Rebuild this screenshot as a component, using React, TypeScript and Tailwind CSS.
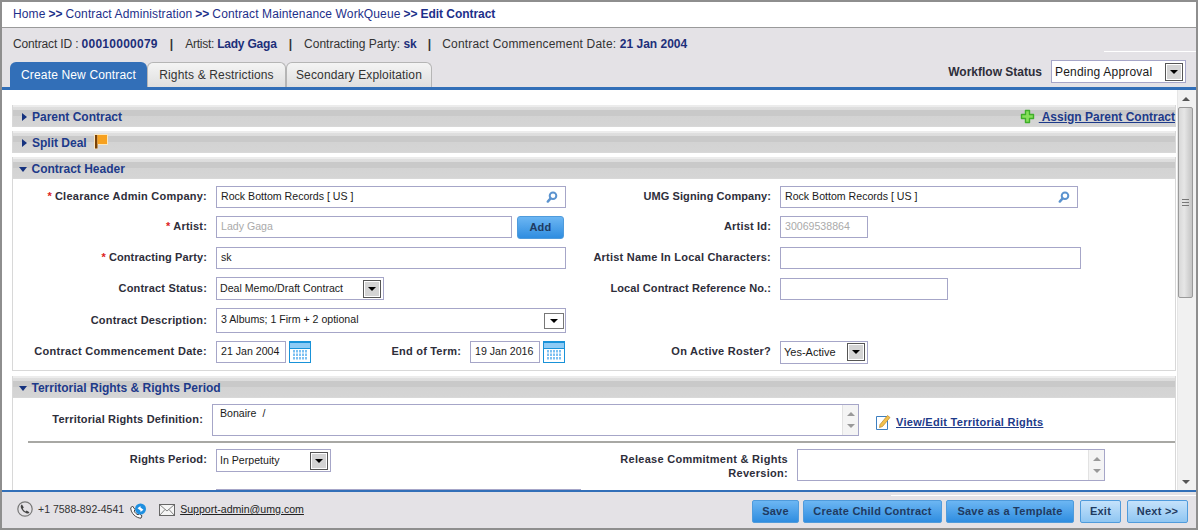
import { ReactNode } from "react";

const inputCls = "h-[22px] border border-[#a6a6c8] bg-white px-[4px] flex items-center text-[10.6px] text-[#1a1a1a] shrink-0";

function Label({ children, req, w, t = "tracking-[0.18px]" }: { children: ReactNode; req?: boolean; w: string; t?: string }) {
  return (
    <div className={`${w} ${t} shrink-0 -mt-[2px] text-right text-[11px] font-bold text-[#2e2e3a] pr-[9px] leading-[14px]`}>
      {req && <span className="text-[#d22] mr-[3px]">*</span>}
      {children}
    </div>
  );
}

function SelectBtn() {
  return (
    <span className="w-[18px] h-[18px] border border-[#555] bg-[#d4d4d4] flex items-center justify-center shrink-0 shadow-[inset_0_0_0_1px_#fff]">
      <span className="w-0 h-0 border-x-[4px] border-x-transparent border-t-[4px] border-t-black" />
    </span>
  );
}

function Select({ text, w, big }: { text: string; w: string; big?: boolean }) {
  return (
    <div className={`${w} h-[23px] border border-[#a6a6c8] bg-white flex items-center justify-between pl-[3px] pr-[2px] ${big ? "text-[11px]" : "text-[10.6px]"} text-[#1a1a1a] shrink-0`}>
      <span className="mt-[1px]">{text}</span>
      <SelectBtn />
    </div>
  );
}

function Lookup({ w }: { w: string }) {
  return (
    <div className={`${inputCls} ${w} justify-between pr-[7px]`}>
      <span>Rock Bottom Records [ US ]</span>
      <svg width="12" height="12" viewBox="0 0 12 12">
        <circle cx="7" cy="4.8" r="3.3" fill="none" stroke="#5b93cf" strokeWidth="2" />
        <path d="M4.6 7.4 1.8 10.6" stroke="#5b93cf" strokeWidth="2.4" strokeLinecap="round" />
      </svg>
    </div>
  );
}

function Calendar() {
  const cols = [4, 7, 10, 13, 16];
  const rows = [9, 12.5, 16];
  return (
    <svg width="22" height="22" viewBox="0 0 22 22" className="shrink-0 ml-[3px]">
      <rect x="0.5" y="0.5" width="21" height="21" fill="#fff" stroke="#1992d8" />
      <rect x="1" y="1" width="20" height="6" fill="#8ecbf5" />
      <rect x="1" y="0" width="20" height="2" fill="#1992d8" />
      <rect x="1" y="7" width="20" height="1" fill="#1992d8" />
      {rows.map((y) => cols.map((x) => <rect key={`${x}-${y}`} x={x} y={y} width="2" height="2.5" fill="#7cc0f2" />))}
    </svg>
  );
}

function Section({ title, open, children, right }: { title: string; open?: boolean; children?: ReactNode; right?: ReactNode }) {
  return (
    <div className="h-[22px] shrink-0 border-x border-b border-[#d8d8d8] bg-[linear-gradient(#ececec_0,#ececec_2px,#dfdfdf_2px,#dcdcdc_5px,#c9c9c9_5px,#c9c9c9_11px,#d3d3d3_11px,#d5d5d5_100%)] flex items-center pt-[2px] pl-[5px] text-[12px] font-bold text-[#1d3a8a]">
      {open ? (
        <span className="w-0 h-0 border-x-[4.5px] border-x-transparent border-t-[5px] border-t-[#16337f] mr-[5px] ml-[0.5px] mt-[1px]" />
      ) : (
        <span className="w-0 h-0 border-y-[4.5px] border-y-transparent border-l-[5px] border-l-[#16337f] ml-[4px] mr-[5px]" />
      )}
      <span>{title}</span>
      {children}
      {right}
    </div>
  );
}

function ScrollArrow({ up }: { up?: boolean }) {
  return up ? (
    <span className="w-0 h-0 border-x-[4px] border-x-transparent border-b-[4px] border-b-[#555]" />
  ) : (
    <span className="w-0 h-0 border-x-[4px] border-x-transparent border-t-[4px] border-t-[#555]" />
  );
}

function MiniScroll() {
  return (
    <div className="w-[16px] h-full border-l border-[#e2e2e2] bg-[#f4f4f4] flex flex-col items-center justify-between py-[7px]">
      <span className="w-0 h-0 border-x-[4px] border-x-transparent border-b-[4px] border-b-[#999]" />
      <span className="w-0 h-0 border-x-[4px] border-x-transparent border-t-[4px] border-t-[#999]" />
    </div>
  );
}

function BlueBtn({ children, w, light }: { children: ReactNode; w: string; light?: boolean }) {
  return (
    <div className={`${w} h-[23px] rounded-[2px] border border-[#4f9bdc] flex items-center justify-center text-[11px] font-bold tracking-[0.25px] text-[#1f3a60] ${light ? "bg-[linear-gradient(#c5e2fb,#8fc6f2)]" : "bg-[linear-gradient(#6cb6f3,#2f8de0)]"}`}>
      {children}
    </div>
  );
}

const crumb = "text-[#1d2f8a]";
const sep = "mx-[3px] text-[#1d2f8a]";
const tabOff = "h-[25px] rounded-t-[6px] border border-b-0 border-[#b5b5b5] bg-[linear-gradient(#f4f4f4,#dfdfdf)] text-[#333] text-[12px] tracking-[0.15px] flex items-center justify-center";

export default function App() {
  return (
    <div className="w-[1198px] h-[530px] border-2 border-[#8e8e8e] bg-white font-['Liberation_Sans',Arial,sans-serif] flex flex-col overflow-hidden">
      <div className="h-[26px] shrink-0 border-b border-[#9a9a9a] flex items-center pl-[11px] pb-[2px] text-[12px] bg-white">
        <span className={`${crumb} tracking-[0.12px]`}>Home</span>
        <b className={sep}>&gt;&gt;</b>
        <span className={`${crumb} tracking-[0.12px]`}>Contract Administration</span>
        <b className={sep}>&gt;&gt;</b>
        <span className={`${crumb} tracking-[0.12px]`}>Contract Maintenance WorkQueue</span>
        <b className={sep}>&gt;&gt;</b>
        <b className={`${crumb} -tracking-[0.05px]`}>Edit Contract</b>
      </div>

      <div className="h-[62px] shrink-0 bg-[#e4e2e6] border-b-[3px] border-[#326fb8] flex flex-col relative">
        <div className="absolute right-0 top-[23px] w-[92px] h-[1px] bg-white" />
        <div className="h-[32px] flex items-center pl-[11px] text-[12px] text-[#333] whitespace-pre">
          <span className="-tracking-[0.15px]">Contract ID : </span><b className="text-[#1d2f7a] tracking-[0.25px]">00010000079</b>
          <b className="mx-[12px]">|</b>
          <span className="-tracking-[0.25px]">Artist: </span><b className="text-[#1d2f7a] -tracking-[0.2px]">Lady Gaga</b>
          <b className="mx-[12px]">|</b>
          <span>Contracting Party: </span><b className="text-[#1d2f7a]">sk</b>
          <b className="mx-[11px]">|</b>
          <span className="tracking-[0.2px]">Contract Commencement Date: </span><b className="text-[#1d2f7a]">21 Jan 2004</b>
        </div>
        <div className="flex-1 flex items-end pl-[8px] pr-[10px]">
          <div className="w-[137px] h-[25px] rounded-t-[6px] bg-[#326fb8] text-white text-[12px] tracking-[0.15px] flex items-center justify-center">Create New Contract</div>
          <div className={`w-[139px] ${tabOff}`}>Rights &amp; Restrictions</div>
          <div className={`w-[146px] ${tabOff}`}>Secondary Exploitation</div>
          <div className="ml-auto flex items-center mb-[4px]">
            <b className="text-[12px] text-[#2e2e3a] mr-[9px] mt-[1px]">Workflow Status</b>
            <div className="w-[135px] h-[23px] border border-[#a6a6c8] bg-white flex items-center justify-between pl-[3px] pr-[2px] text-[12px] tracking-[0.2px] text-[#1a1a1a]">
              <span className="mt-[1px]">Pending Approval</span>
              <SelectBtn />
            </div>
          </div>
        </div>
      </div>

      <div className="h-[400px] shrink-0 flex overflow-hidden">
        <div className="flex-1 min-w-0 pl-[10px] pr-[1px] pt-[15px] flex flex-col">
          <Section
            title="Parent Contract"
            right={
              <div className="ml-auto flex items-center text-[12px] text-[#1d3a8a]">
                <svg width="15" height="15" viewBox="0 0 15 15" className="mr-[4px]">
                  <path d="M5.5 1.5h4v4h4v4h-4v4h-4v-4h-4v-4h4z" fill="#86e05a" stroke="#3fae2a" strokeWidth="1.4" strokeLinejoin="round" />
                </svg>
                <span className="underline whitespace-pre"> Assign Parent Contract</span>
              </div>
            }
          />
          <div className="h-[4px] shrink-0" />
          <Section title="Split Deal">
            <svg width="14" height="15" viewBox="0 0 14 15" className="ml-[7px] -mt-[2px]">
              <rect x="0" y="0" width="14" height="11" fill="#fbe7c0" />
              <rect x="0" y="0" width="4" height="15" fill="#fbe7c0" />
              <rect x="1" y="1" width="2.5" height="13.5" fill="#7a4208" />
              <rect x="3.5" y="1" width="9.5" height="9" fill="#f7a11f" />
            </svg>
          </Section>
          <div className="h-[4px] shrink-0" />
          <Section title="Contract Header" open />

          <div className="border-x border-b border-[#d8d8d8] h-[192px] shrink-0 pt-[7px] flex flex-col gap-[8px]">
            <div className="flex items-center h-[22px]">
              <Label w="w-[203px]" t="tracking-[0.24px]" req>Clearance Admin Company:</Label>
              <Lookup w="w-[350px]" />
              <Label w="w-[214px]" t="tracking-[0.08px]">UMG Signing Company:</Label>
              <Lookup w="w-[298px]" />
            </div>
            <div className="flex items-center h-[22px]">
              <Label w="w-[203px]" req>Artist:</Label>
              <div className={`${inputCls} w-[296px] text-[#aaa]`}>Lady Gaga</div>
              <div className="w-[47px] h-[23px] ml-[5px] mr-[2px] rounded-[3px] border border-[#4f9bdc] bg-[linear-gradient(#6cb6f3,#2f8de0)] flex items-center justify-center text-[11px] font-bold tracking-[0.25px] text-[#1f3a60]">Add</div>
              <Label w="w-[214px]">Artist Id:</Label>
              <div className={`${inputCls} w-[88px] text-[#aaa]`}>30069538864</div>
            </div>
            <div className="flex items-center h-[22px] mt-[1px]">
              <Label w="w-[203px]" t="tracking-[0.12px]" req>Contracting Party:</Label>
              <div className={`${inputCls} w-[350px]`}>sk</div>
              <Label w="w-[214px]" t="tracking-[0.22px]">Artist Name In Local Characters:</Label>
              <div className={`${inputCls} w-[301px]`} />
            </div>
            <div className="flex items-center h-[23px]">
              <Label w="w-[203px]">Contract Status:</Label>
              <Select text="Deal Memo/Draft Contract" w="w-[168px]" />
              <Label w="w-[396px]" t="tracking-[0.1px]">Local Contract Reference No.:</Label>
              <div className={`${inputCls} w-[168px]`} />
            </div>
            <div className="flex items-center h-[25px]">
              <Label w="w-[203px]">Contract Description:</Label>
              <div className="w-[350px] h-[25px] border border-[#a6a6c8] bg-white flex items-center justify-between pl-[4px] pr-[1px] text-[10.6px] text-[#1a1a1a]">
                <span className="-mt-[1px]">3 Albums; 1 Firm + 2 optional</span>
                <span className="w-[20px] h-[16px] border border-[#777] bg-white flex items-center justify-center">
                  <span className="w-0 h-0 border-x-[4px] border-x-transparent border-t-[4px] border-t-black" />
                </span>
              </div>
            </div>
            <div className="flex items-center h-[22px]">
              <Label w="w-[203px]" t="tracking-[0.31px]">Contract Commencement Date:</Label>
              <div className={`${inputCls} w-[70px]`}>21 Jan 2004</div>
              <Calendar />
              <Label w="w-[159px]" t="tracking-[0.2px]">End of Term:</Label>
              <div className={`${inputCls} w-[70px]`}>19 Jan 2016</div>
              <Calendar />
              <Label w="w-[215px]" t="tracking-[0.24px]">On Active Roster?</Label>
              <Select text="Yes-Active" w="w-[88px]" big />
            </div>
          </div>

          <div className="h-[5px] shrink-0" />
          <Section title="Territorial Rights & Rights Period" open />
          <div className="border-x border-[#d8d8d8] flex-1 min-h-0 overflow-hidden">
            <div className="flex items-start h-[43px] pt-[6px]">
              <Label w="w-[199px]"><span className="block pt-[10px]">Territorial Rights Definition:</span></Label>
              <div className="w-[647px] h-[32px] border border-[#a6a6c8] bg-white flex justify-between text-[10.6px] text-[#1a1a1a] shrink-0">
                <span className="pl-[7px] pt-[1px] whitespace-pre">Bonaire  /</span>
                <MiniScroll />
              </div>
              <div className="flex items-center ml-[17px] mt-[10px] text-[11px] font-bold tracking-[0.28px] text-[#1d3a8a]">
                <svg width="15" height="16" viewBox="0 0 15 16" className="mr-[5px]">
                  <path d="M.5 2.5h11v13H.5z" fill="#fff" stroke="#3d7fc0" />
                  <path d="M4 10.5 11.5 1.5l2.5 2-7.5 9-3 1z" fill="#f2c14e" stroke="#b9862a" strokeWidth="0.7" />
                </svg>
                <span className="underline">View/Edit Territorial Rights</span>
              </div>
            </div>
            <div className="h-[2px] bg-[#a8a8a4] ml-[15px]" />
            <div className="flex items-start pt-[6px]">
              <Label w="w-[203px]" t="tracking-[0.14px]"><span className="block pt-[5px]">Rights Period:</span></Label>
              <Select text="In Perpetuity" w="w-[115px]" />
              <Label w="w-[466px]" t="tracking-[0.28px]"><span className="block pt-[5px]">Release Commitment &amp; Rights<br />Reversion:</span></Label>
              <div className="w-[308px] h-[32px] border border-[#a6a6c8] bg-white flex justify-end shrink-0">
                <MiniScroll />
              </div>
            </div>
            <div className="h-[1px] bg-[#a6a6c8] ml-[203px] w-[365px] mt-[8px]" />
          </div>
        </div>

        <div className="w-[19px] shrink-0 bg-[#f1f1f1] border-l border-[#e6e6e6] pr-[3px] flex flex-col items-center">
          <div className="h-[17px] flex items-center"><ScrollArrow up /></div>
          <div className="w-[15px] h-[191px] rounded-[2px] border border-[#9a9a9a] bg-[linear-gradient(90deg,#d8d8d8,#e6e6e6_40%,#c4c4c4)] flex items-center justify-center">
            <span className="w-[7px] h-[7px] border-y border-[#777] relative before:content-[''] before:absolute before:left-0 before:right-0 before:top-[2px] before:h-[1px] before:bg-[#777]" />
          </div>
          <div className="mt-auto h-[16px] flex items-center"><ScrollArrow /></div>
        </div>
      </div>

      <div className="flex-1 min-h-0 relative bg-[#e4e2e6] border-t-[2px] border-[#326fb8] flex items-center pl-[15px] pr-[8px]">
        <div className="absolute right-0 top-[3px] w-[305px] h-[1px] bg-white" />
        <svg width="16" height="16" viewBox="0 0 16 16" className="shrink-0 -mt-[2px]">
          <circle cx="8" cy="8" r="7.2" fill="none" stroke="#777" strokeWidth="1.2" />
          <path d="M5 3.5 6.8 6.5 5.8 7.5C6.2 8.8 7.4 10 8.6 10.4l1-1 2.8 1.8c-.5 1.2-1.5 1.5-2.5 1.2C7 11.6 4.6 9.2 3.8 6.3 3.5 5 4 4 5 3.5z" fill="#444" />
        </svg>
        <span className="ml-[5px] -mt-[1px] text-[10.5px] text-[#333]">+1 7588-892-4541</span>
        <svg width="17" height="16" viewBox="0 0 17 16" className="ml-[6px] shrink-0 mt-[1px]">
          <path d="M2.5 3 5 6.5 4.2 8.2c.8 1.7 2.2 3 3.9 3.6l1.3-1 2.6 2-1 2.4C6 15 1 10.5.7 5z" fill="#fff" stroke="#444" />
          <circle cx="10.5" cy="6" r="5.5" fill="#1e8fe0" />
          <path d="M7.5 5.2 10.5 3v4.5zM13.5 6.8 10.5 9V4.5z" fill="#fff" />
        </svg>
        <svg width="16" height="12" viewBox="0 0 16 12" className="ml-[12px] shrink-0 -mt-[1px]">
          <rect x="0.5" y="0.5" width="15" height="11" fill="#f5f5f5" stroke="#666" />
          <path d="M.5.5 8 7l7.5-6.5M.5 11.5 6 5.5M15.5 11.5 10 5.5" fill="none" stroke="#666" strokeWidth="0.8" />
        </svg>
        <span className="ml-[5px] text-[10.6px] text-[#222] underline">Support-admin@umg.com</span>
        <div className="ml-auto flex mt-[3px]">
          <BlueBtn w="w-[47px]">Save</BlueBtn>
          <div className="w-[4px]" />
          <BlueBtn w="w-[139px]">Create Child Contract</BlueBtn>
          <div className="w-[4px]" />
          <BlueBtn w="w-[128px]">Save as a Template</BlueBtn>
          <div className="w-[6px]" />
          <BlueBtn w="w-[41px]" light>Exit</BlueBtn>
          <div className="w-[6px]" />
          <BlueBtn w="w-[61px]" light>Next &gt;&gt;</BlueBtn>
        </div>
      </div>
    </div>
  );
}
